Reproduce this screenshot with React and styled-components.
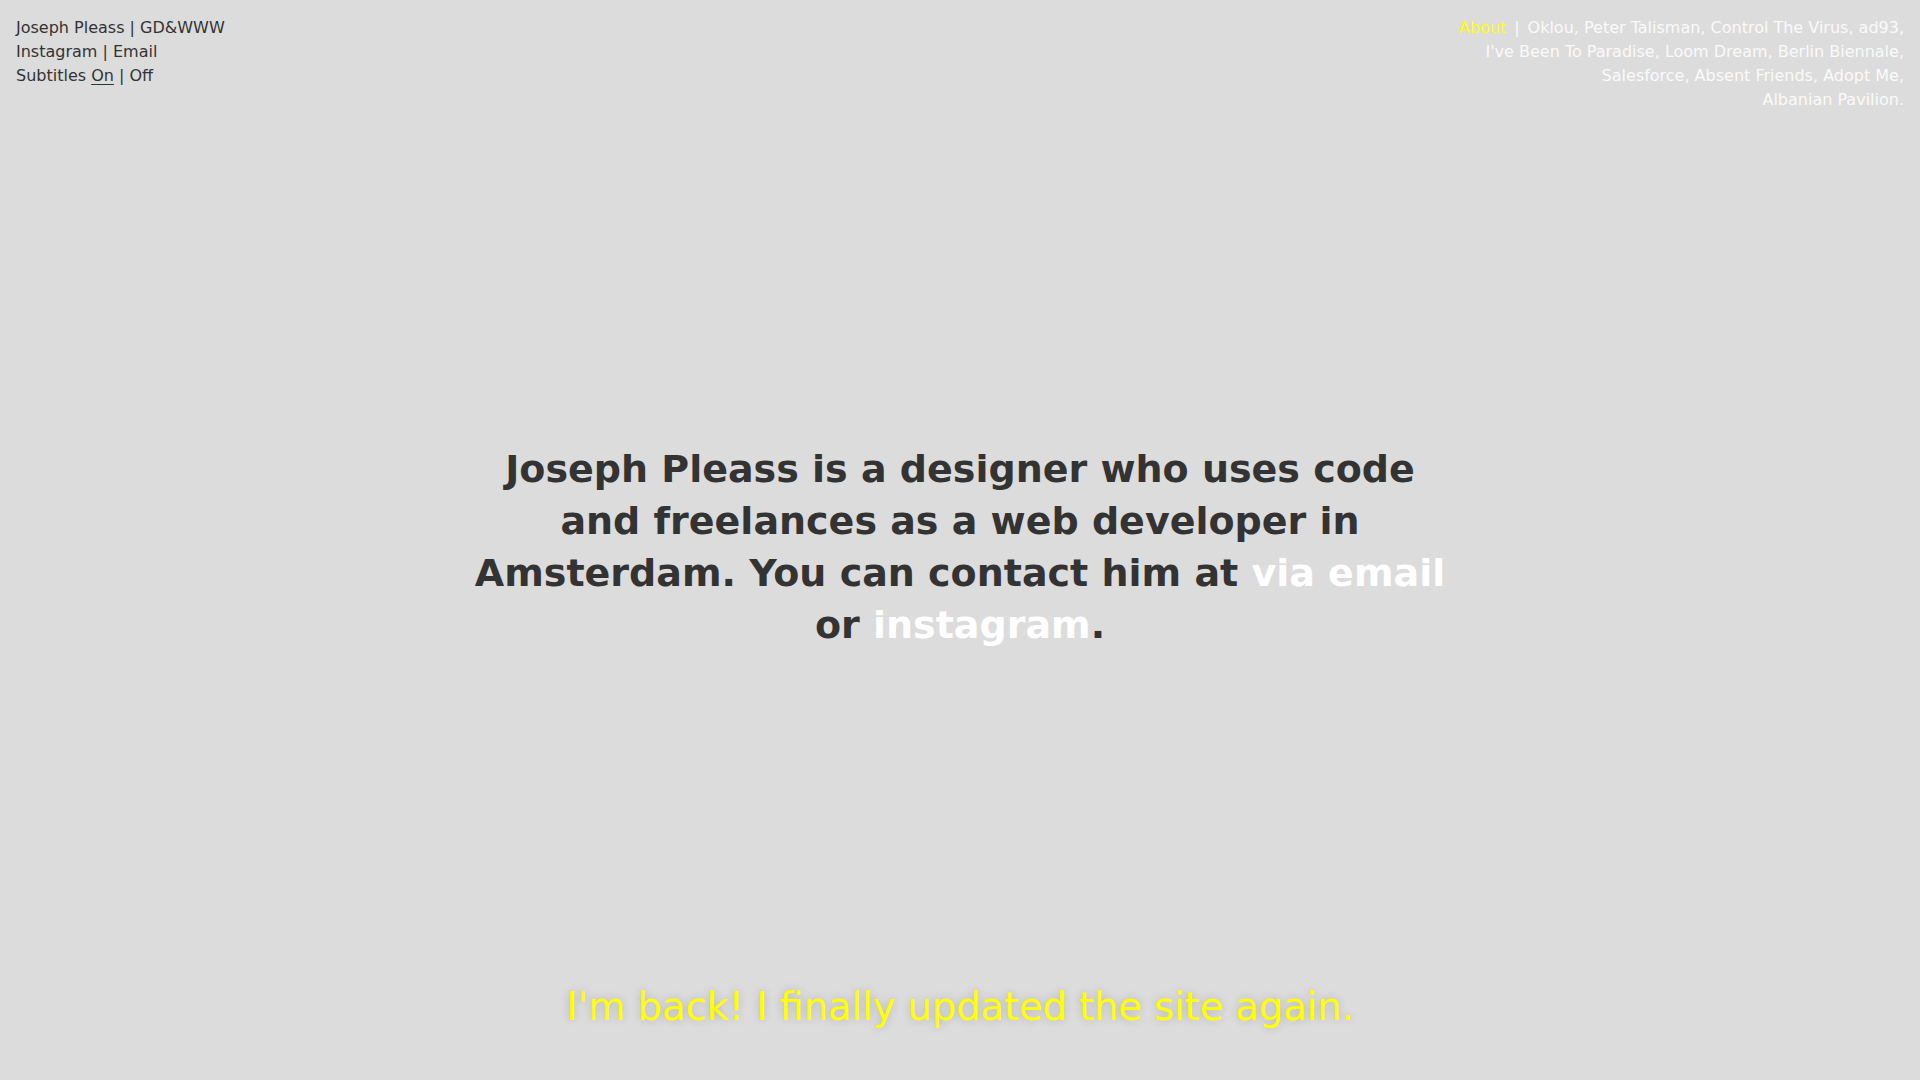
import React from "react";
import styled, { createGlobalStyle } from "styled-components";

const Global = createGlobalStyle`
  html, body {
    margin: 0;
    padding: 0;
    background: #dcdcdc;
  }
  body {
    font-family: "DejaVu Sans", "Liberation Sans", sans-serif;
    color: #333;
  }
  a {
    color: inherit;
    text-decoration: none;
  }
`;

const Page = styled.div`
  height: 100vh;
  display: flex;
  flex-direction: column;
  overflow: hidden;
`;

const Header = styled.header`
  display: flex;
  justify-content: space-between;
  align-items: flex-start;
  padding: 16px 16px 0;
  font-size: 16px;
  line-height: 24px;
`;

const Meta = styled.div`
  display: flex;
  flex-direction: column;
`;

const Toggle = styled.a`
  text-decoration: ${(p) => (p.$active ? "underline" : "none")};
  text-underline-offset: 3px;
`;

const Projects = styled.nav`
  width: 448px;
  text-align: right;
  color: #fafafa;
`;

const Project = styled.span`
  white-space: nowrap;
`;

const AboutLink = styled.a`
  color: #ffff00;
`;

const Sep = styled.span`
  padding: 0 8px 0 8px;
`;

const Main = styled.main`
  flex: 1;
  display: flex;
  align-items: center;
  justify-content: center;
  margin-top: -2px;
`;

const Intro = styled.p`
  margin: 0;
  max-width: 990px;
  text-align: center;
  font-size: 38px;
  font-weight: bold;
  line-height: 52px;
`;

const Highlight = styled.a`
  color: #fff;
`;

const Subtitle = styled.div`
  padding-bottom: 50px;
  text-align: center;
  color: #ffff00;
  font-size: 38.3px;
  line-height: 46px;
  text-shadow: 0 0 10px rgba(0, 0, 0, 0.2);
`;

const projects = [
  "Oklou",
  "Peter Talisman",
  "Control The Virus",
  "ad93",
  "I've Been To Paradise",
  "Loom Dream",
  "Berlin Biennale",
  "Salesforce",
  "Absent Friends",
  "Adopt Me",
  "Albanian Pavilion",
];

export default function App() {
  return (
    <Page>
      <Global />
      <Header>
        <Meta>
          <span>Joseph Pleass | GD&amp;WWW</span>
          <span>
            <a href="#">Instagram</a> | <a href="#">Email</a>
          </span>
          <span>
            Subtitles <Toggle $active href="#">On</Toggle> | <Toggle href="#">Off</Toggle>
          </span>
        </Meta>
        <Projects>
          <AboutLink href="#">About</AboutLink>
          <Sep>|</Sep>
          {projects.map((p, i) => (
            <React.Fragment key={p}>
              <Project>
                <a href="#">{p}</a>
                {i < projects.length - 1 ? "," : "."}
              </Project>
              {i < projects.length - 1 ? " " : ""}
            </React.Fragment>
          ))}
        </Projects>
      </Header>
      <Main>
        <Intro>
          Joseph Pleass is a designer who uses code and freelances as a web
          developer in Amsterdam. You can contact him at{" "}
          <Highlight href="#">via email</Highlight> or{" "}
          <Highlight href="#">instagram</Highlight>.
        </Intro>
      </Main>
      <Subtitle>I'm back! I finally updated the site again.</Subtitle>
    </Page>
  );
}
